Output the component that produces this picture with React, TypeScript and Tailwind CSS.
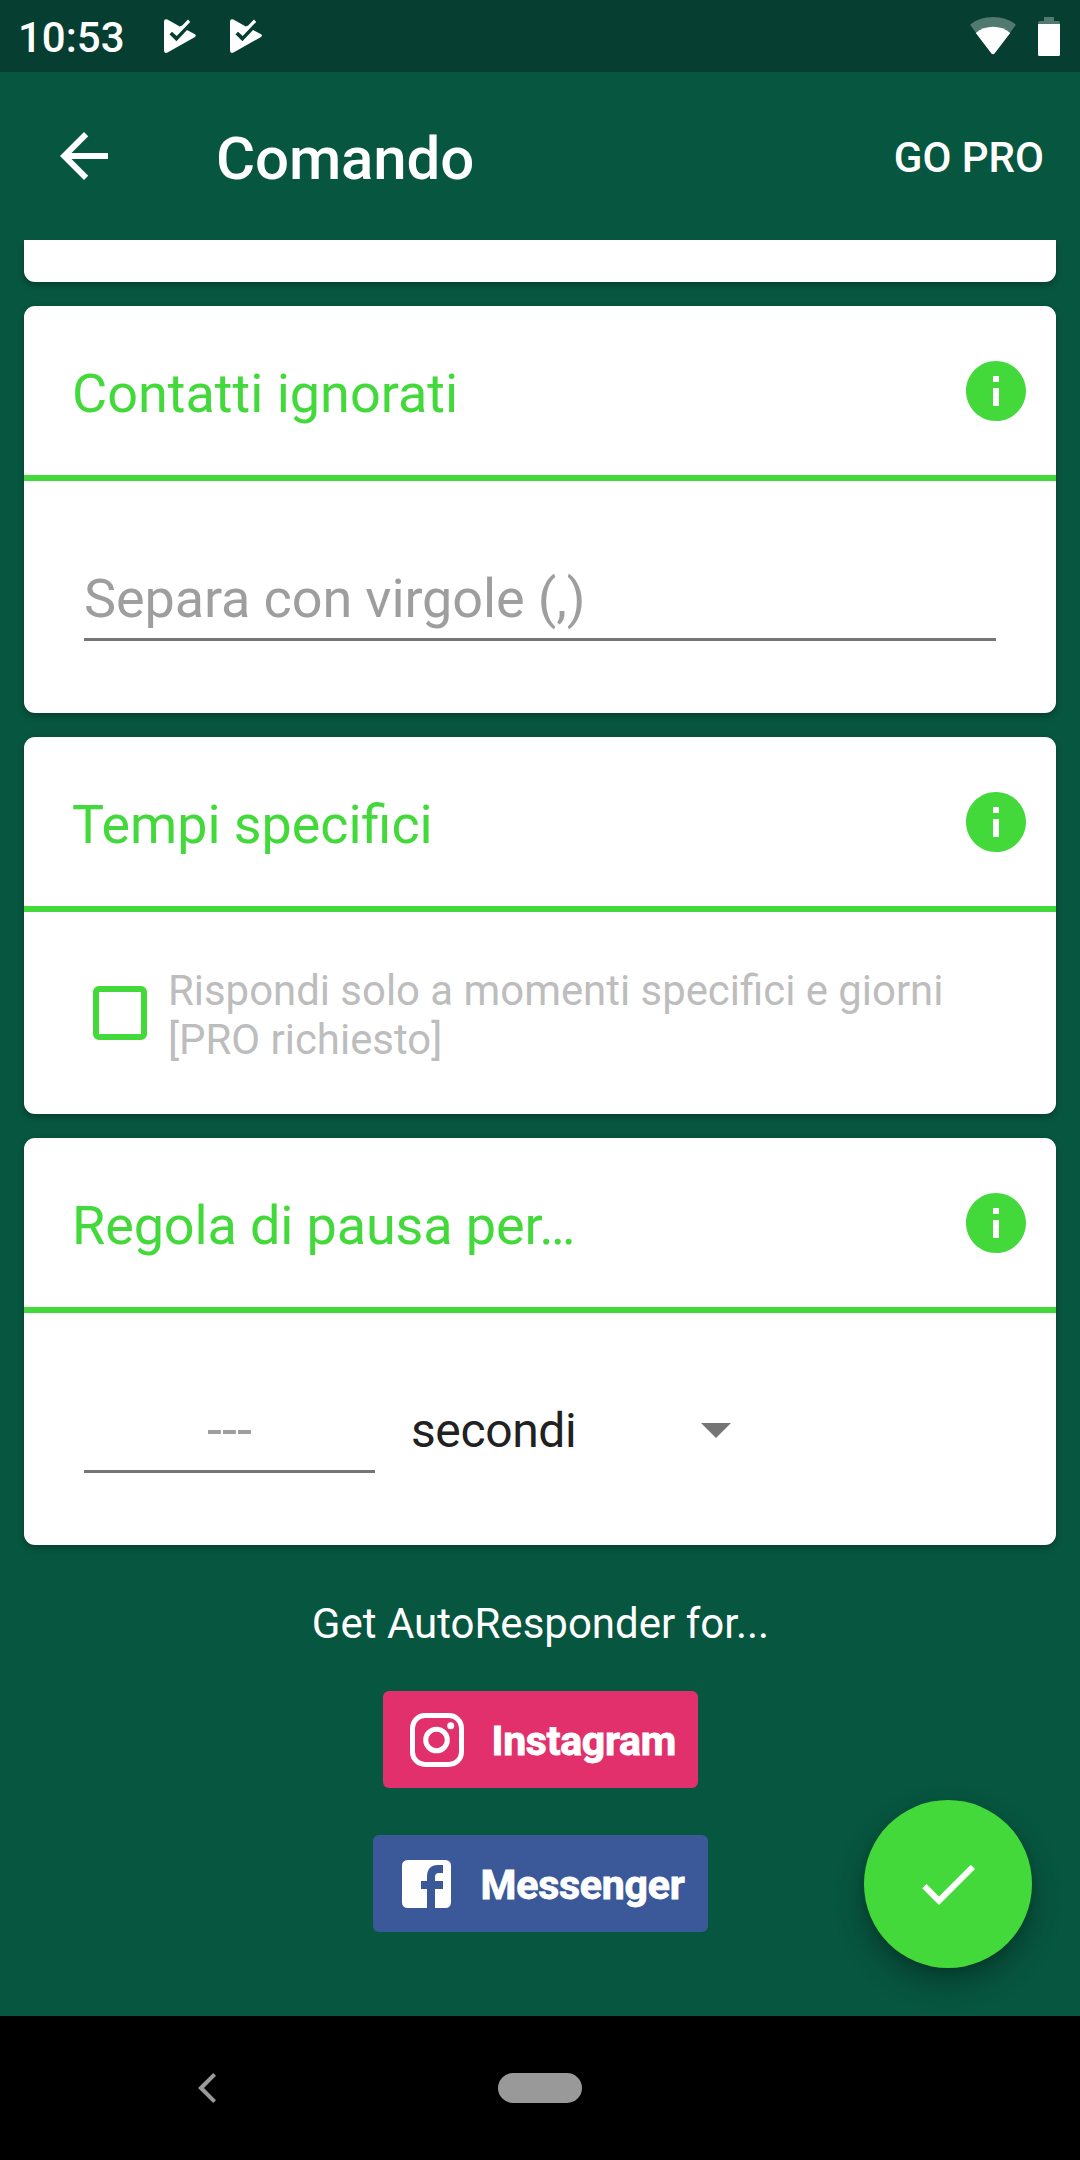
import type { ReactNode } from "react";

const PlayCheck = () => (
  <svg viewBox="0 -1 33 36" className="h-9 w-[33px]" fill="#fff">
    <path d="M3.4 0.5 L15.8 7.6 L18.2 6.6 L24 0.5 L26.2 2.9 L12.7 17 L8 12.8 L5.5 15.3 L12.4 22.3 L23 11 L31 15.3 Q32.8 16.5 31 17.9 L3.5 33.6 Q0 34.8 0 31.5 V2.5 Q0.2 -0.6 3.4 0.5Z" />
  </svg>
);

function InfoIcon() {
  return (
    <svg viewBox="0 0 24 24" className="h-[72px] w-[72px]" fill="#43d93b">
      <path d="M12 2C6.48 2 2 6.48 2 12s4.48 10 10 10 10-4.48 10-10S17.52 2 12 2zm1 15h-2v-6h2v6zm0-8h-2V7h2v2z" />
    </svg>
  );
}

interface CardProps {
  title: string;
  height: string;
  titleClass?: string;
  children: ReactNode;
}

function Card({ title, height, titleClass = "text-[54px]", children }: CardProps) {
  return (
    <section className={`flex flex-col rounded-[11px] bg-white shadow-[0_3px_6px_rgba(0,0,0,0.28)] ${height}`}>
      <header className="flex h-[175px] shrink-0 items-center justify-between border-b-[6px] border-[#43d93b] pr-6 pl-12">
        <h2 className={`pt-1.5 leading-[64px] text-[#43d93b] ${titleClass}`}>{title}</h2>
        <InfoIcon />
      </header>
      {children}
    </section>
  );
}

export default function App() {
  return (
    <div className="flex h-[2160px] w-[1080px] flex-col overflow-hidden bg-[#075640] font-['Roboto',sans-serif]">
      <div className="flex h-[72px] shrink-0 items-center bg-[#063f31] pr-5 pl-[18px] text-white">
        <span className="w-[146px] pt-1 text-[42px] leading-none font-medium">10:53</span>
        <div className="flex gap-[33px]">
          <PlayCheck />
          <PlayCheck />
        </div>
        <svg viewBox="0 0 46 38" className="ml-auto h-[38px] w-[46px]" fill="#fff">
          <path d="M0.6 8.6 Q0 7.8 0.8 7 Q10 0 23 0 Q36 0 45.2 7 Q46 7.8 45.4 8.6 L24.5 36.5 Q23 38 21.5 36.5Z" fillOpacity="0.3" />
          <path d="M5.8 16 Q13 9.7 23 9.7 Q33 9.7 40.2 16 L24.5 36.5 Q23 38 21.5 36.5Z" />
        </svg>
        <svg viewBox="0 0 22 39" className="ml-[22px] h-[39px] w-[22px]" fill="#fff">
          <path d="M6 0H16V4H20.5Q22 4 22 7H0Q0 4 1.5 4H6Z" fillOpacity="0.3" />
          <path d="M0 7H22V37.5Q22 39 20.5 39H1.5Q0 39 0 37.5Z" />
        </svg>
      </div>

      <div className="flex h-[168px] shrink-0 items-center pr-9 pl-12 text-white">
        <svg viewBox="0 0 24 24" className="h-[72px] w-[72px]" fill="#fff">
          <path d="M20 11H7.83l5.59-5.59L12 4l-8 8 8 8 1.41-1.41L7.83 13H20v-2z" />
        </svg>
        <h1 className="ml-24 pt-1.5 text-[60px] leading-none font-medium tracking-[-0.15px]">Comando</h1>
        <span className="ml-auto pt-1 text-[42px] leading-none font-medium">GO PRO</span>
      </div>

      <main className="relative flex h-[1776px] shrink-0 flex-col overflow-hidden px-6">
        <div className="mb-6 h-[42px] shrink-0 rounded-b-[11px] bg-white shadow-[0_3px_6px_rgba(0,0,0,0.28)]" />
        <div className="flex flex-col gap-6">
          <Card title="Contatti ignorati" height="h-[407px]">
            <div className="mx-15 mt-[86px] h-[74px] border-b-3 border-[#757575]">
              <p className="text-[54px] leading-[64px] tracking-[-0.12px] text-[#9e9e9e]">Separa con virgole (,)</p>
            </div>
          </Card>
          <Card title="Tempi specifici" height="h-[377px]" titleClass="text-[53.8px]">
            <div className="flex grow items-center pl-[69px]">
              <span className="h-[54px] w-[54px] shrink-0 rounded-md border-[6px] border-[#43d93b]" />
              <p className="ml-[21px] pt-1 text-[41.9px] leading-[49px] text-[#bdbdbd]">
                Rispondi solo a momenti specifici e giorni
                <br />
                [PRO richiesto]
              </p>
            </div>
          </Card>
          <Card title="Regola di pausa per…" height="h-[407px]" titleClass="text-[54px] tracking-[-0.14px]">
            <div className="mt-[84px] ml-15 flex">
              <div className="h-[76px] w-[291px] border-b-3 border-[#757575] text-center text-[54px] leading-[66px] text-[#9e9e9e]">
                ---
              </div>
              <span className="ml-9 w-[290px] text-[48px] leading-[68px] tracking-[-0.4px] text-[#212121]">secondi</span>
              <svg viewBox="0 0 30 15" className="mt-[26px] h-[15px] w-[30px]" fill="#757575">
                <path d="M0 0H30L15 15Z" />
              </svg>
            </div>
          </Card>
        </div>

        <div className="flex flex-col items-center pt-[54px] text-white">
          <p className="pl-px text-[42px] leading-[50px]">Get AutoResponder for...</p>
          <div className="mt-[42px] flex h-[97px] w-[315px] items-center rounded-md bg-[#e1306c] pl-[27px]">
            <svg viewBox="0 0 54 54" className="h-[54px] w-[54px]" fill="none" stroke="#fff" strokeWidth="5">
              <rect x="2.5" y="2.5" width="49" height="49" rx="12.5" />
              <circle cx="26.5" cy="27" r="10.8" />
              <circle cx="40.7" cy="12.7" r="3.5" fill="#fff" stroke="none" />
            </svg>
            <span className="ml-[28px] pt-[3px] text-[41px] leading-none font-bold tracking-[-0.3px] [-webkit-text-stroke:0.9px_#fff]">
              Instagram
            </span>
          </div>
          <div className="mt-[47px] flex h-[97px] w-[335px] items-center rounded-md bg-[#3b5998] pl-[29px]">
            <svg viewBox="0 0 49 48" className="h-12 w-[49px]">
              <rect width="49" height="48" rx="5.5" fill="#fff" />
              <path d="M25 48V29H19V21H25V17Q25 5 36 5H41V13H37Q33 13 33 17V21H41V29H33V48Z" fill="#3b5998" />
            </svg>
            <span className="ml-[30px] pt-[3px] text-[41px] leading-none font-bold tracking-[-0.2px] [-webkit-text-stroke:0.9px_#fff]">
              Messenger
            </span>
          </div>
        </div>

        <button className="absolute right-12 bottom-12 flex h-[168px] w-[168px] items-center justify-center rounded-full bg-[#43d93b] shadow-[0_14px_30px_rgba(0,0,0,0.3),0_2px_6px_rgba(0,0,0,0.12)]">
          <svg viewBox="0 0 24 24" className="h-[72px] w-[72px]" fill="#fff">
            <path d="M9 16.17L4.83 12l-1.42 1.41L9 19 21 7l-1.41-1.41z" />
          </svg>
        </button>
      </main>

      <nav className="flex h-36 shrink-0 items-center bg-black pl-[198px]">
        <svg viewBox="0 0 18 30" className="h-[30px] w-[18px]" fill="#999">
          <path d="M15.2 0 L18 2.8 L6 15 L18 27.2 L15.2 30 L0 15Z" />
        </svg>
        <span className="ml-[282px] h-[30px] w-[84px] rounded-full bg-[#999]" />
      </nav>
    </div>
  );
}
